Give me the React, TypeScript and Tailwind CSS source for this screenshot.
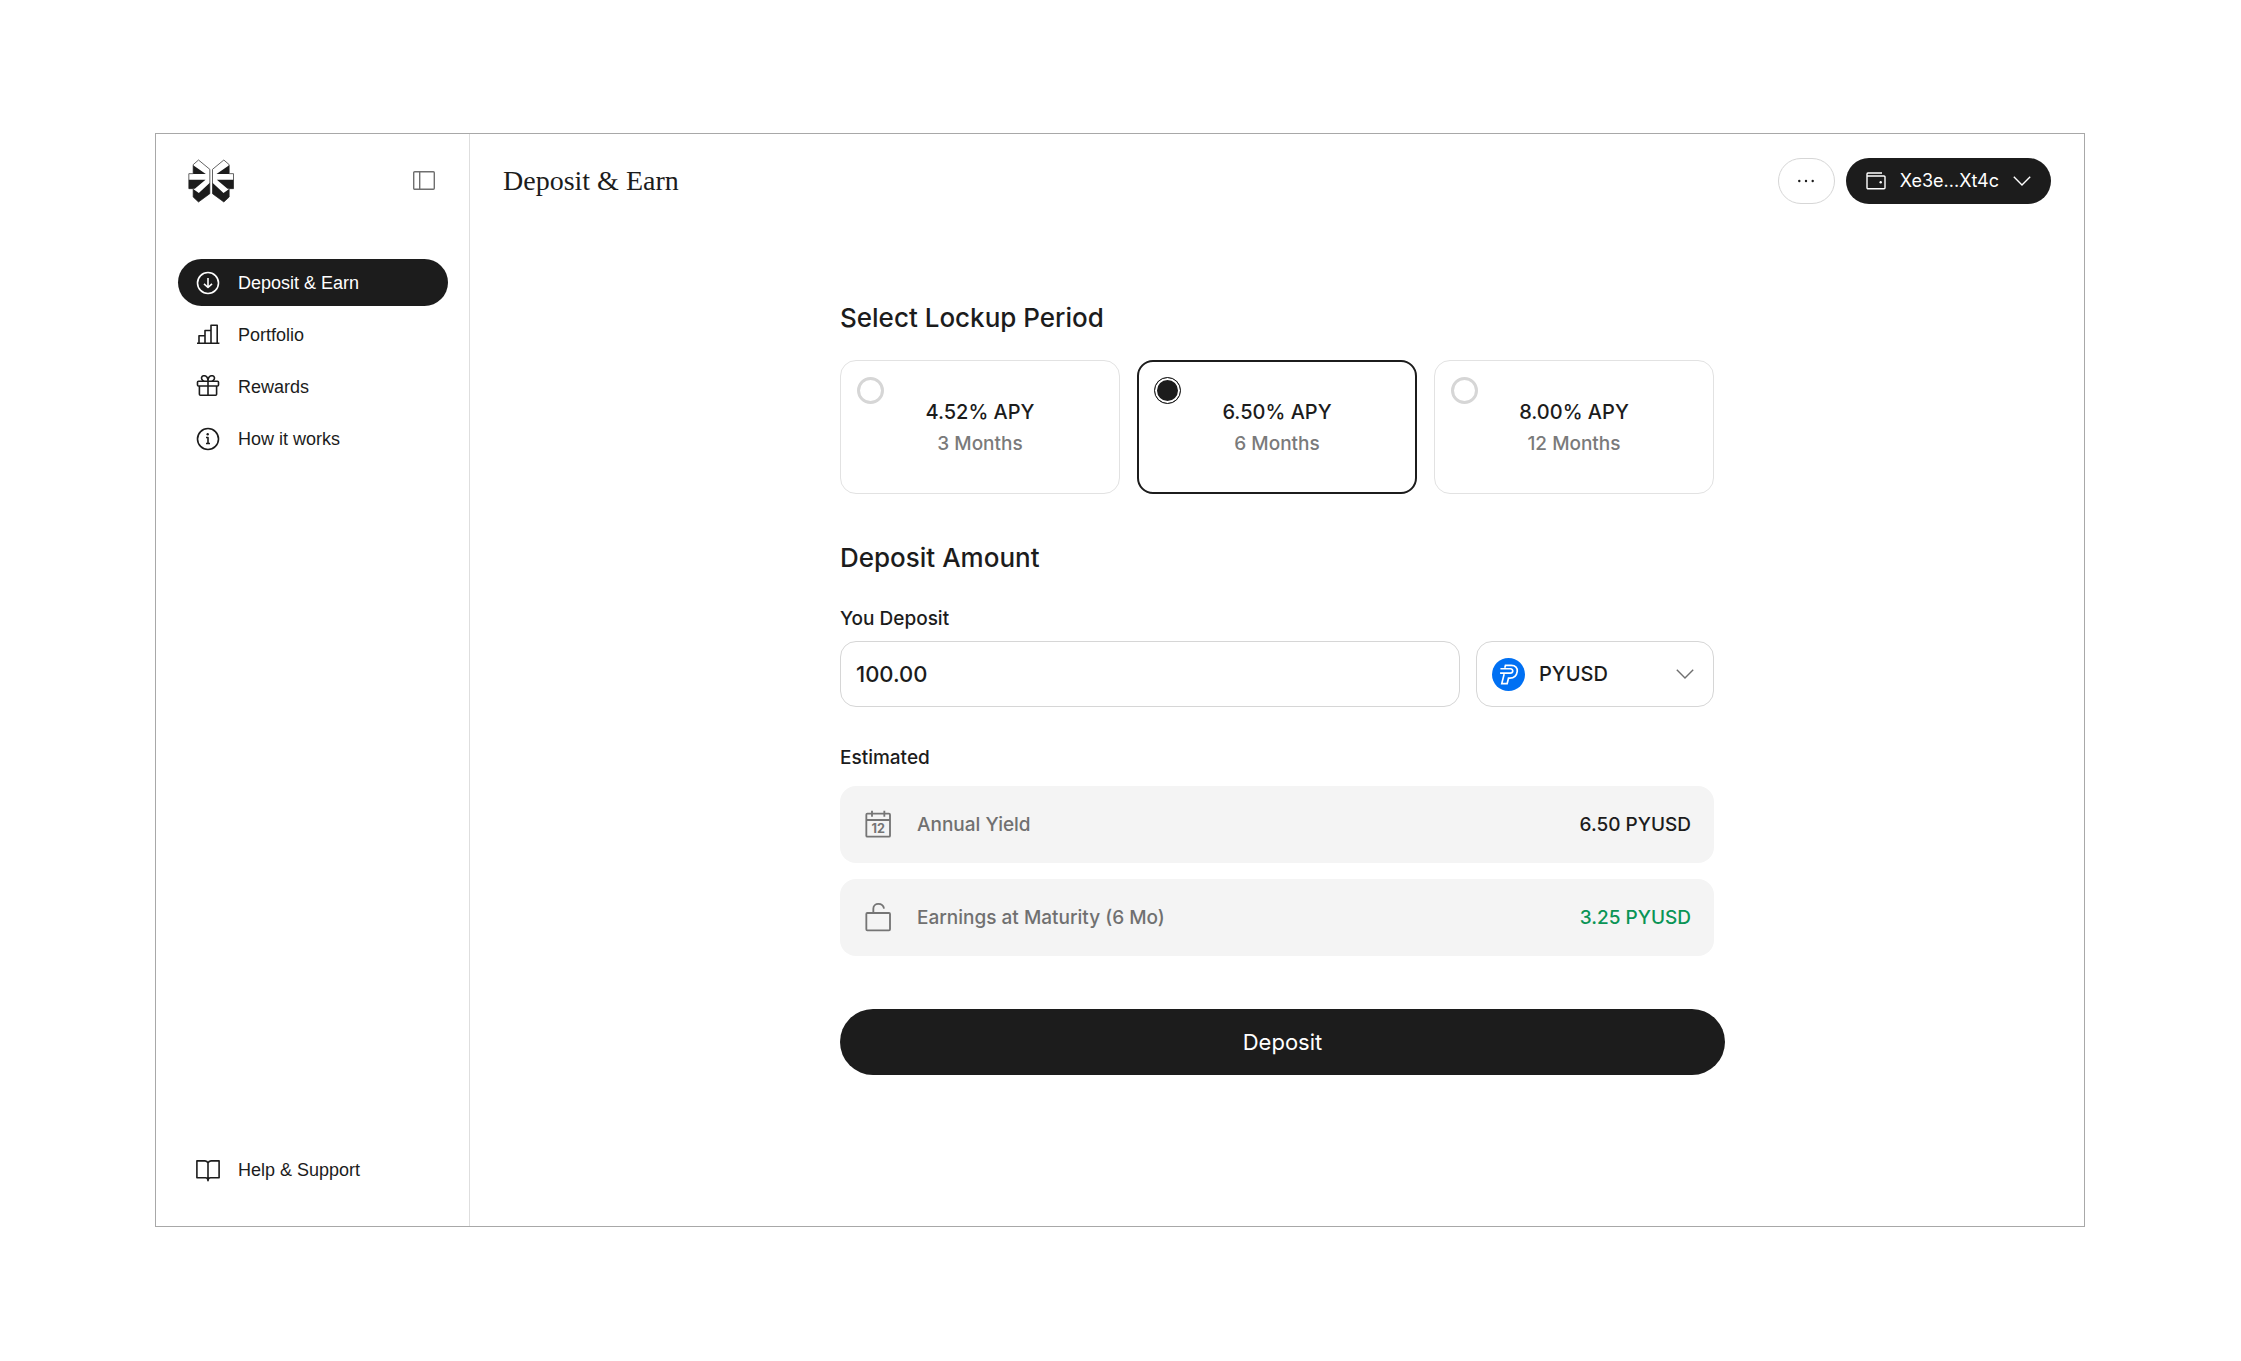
import React, { useState } from "react";

const plans = [
  { id: "3", apy: "4.52% APY", period: "3 Months" },
  { id: "6", apy: "6.50% APY", period: "6 Months" },
  { id: "12", apy: "8.00% APY", period: "12 Months" },
];

const Logo = () => (
  <svg viewBox="116 100 137 132" className="w-[46px] h-11" fill="none">
    {["", "translate(370 0) scale(-1 1)"].map((t) => (
      <g key={t} transform={t}>
        <path
          d="M147 103 181 131V204L147 229 131 214V189H118V144H131V117Z"
          fill="#fff"
          stroke="#444"
          strokeWidth="2.5"
        />
        <path
          d="M131 119 169 145H131ZM118 162H168L136 189H118ZM181 171V204L147 229 131 214V190L148 202Z"
          fill="#1c1c1c"
        />
      </g>
    ))}
  </svg>
);

const PanelIcon = () => (
  <svg viewBox="0 0 22 19" className="w-[22px] h-[19px]" fill="none" stroke="#6f6f6f" strokeWidth="1.4">
    <rect x="0.7" y="0.7" width="20.6" height="17.6" rx="1" />
    <path d="M6.7 1v17" />
  </svg>
);

const NavIcon = ({ children }: { children: React.ReactNode }) => (
  <svg
    viewBox="0 0 24 24"
    className="w-6 h-6 shrink-0"
    fill="none"
    stroke="currentColor"
    strokeWidth="1.6"
    strokeLinejoin="round"
  >
    {children}
  </svg>
);

const Chevron = ({ className }: { className: string }) => (
  <svg viewBox="0 0 18 10" className={className} fill="none" stroke="currentColor" strokeWidth="1.4">
    <path d="M0.8 0.8 9 9 17.2 0.8" />
  </svg>
);

const navItems = [
  {
    label: "Deposit & Earn",
    active: true,
    icon: (
      <>
        <circle cx="12" cy="12" r="10.5" />
        <path d="M12 7v9.5M8 12.8l4 3.7 4-3.7" />
      </>
    ),
  },
  {
    label: "Portfolio",
    icon: <path d="M1 20.3h22.4M3 20v-7.3h6M9 20V7.5h6M15 20V2.3h6.2V20" />,
  },
  {
    label: "Rewards",
    icon: (
      <>
        <rect x="1.5" y="6.3" width="21" height="4.7" rx="1" />
        <path d="M3.4 11v8.3a1 1 0 0 0 1 1h15.2a1 1 0 0 0 1-1V11M12 6.3v14" />
        <path d="M12 6.3C12 3 10.5 0.7 8 0.7 5.5 0.7 4.8 3.6 6.5 5.2 7 5.8 7.6 6.2 8.2 6.3M12 6.3C12 3 13.5 0.7 16 0.7c2.5 0 3.2 2.9 1.5 4.5C17 5.8 16.4 6.2 15.8 6.3" />
      </>
    ),
  },
  {
    label: "How it works",
    icon: (
      <>
        <circle cx="12" cy="12" r="10.5" />
        <path d="M10 10.5h2v6M10 16.5h4" />
        <circle cx="11.7" cy="7.2" r="1.2" fill="currentColor" stroke="none" />
      </>
    ),
  },
];

const Sidebar = () => (
  <aside className="w-[314px] shrink-0 border-r border-[#dedede] flex flex-col">
    <div className="flex items-center justify-between h-[93px] pl-8 pr-[34px]">
      <a href="#" aria-label="Home">
        <Logo />
      </a>
      <button aria-label="Toggle sidebar">
        <PanelIcon />
      </button>
    </div>
    <nav className="flex flex-col gap-[5px] pl-[22px] pr-[21px] mt-8 flex-1 pb-[33px] font-['Liberation_Sans',Arial,sans-serif] text-lg">
      {navItems.map((item) => (
        <a
          key={item.label}
          href="#"
          className={`flex items-center gap-[18px] h-[47px] px-[18px] rounded-full ${
            item.active ? "bg-[#1c1c1c] text-white" : ""
          }`}
        >
          <NavIcon>{item.icon}</NavIcon>
          {item.label}
        </a>
      ))}
      <a href="#" className="flex items-center gap-[18px] h-[47px] px-[18px] mt-auto">
        <NavIcon>
          <path d="M12 5C11.5 3.6 10.5 2.9 9 2.9H0.9V19.8H9.5C11 19.8 12 20.5 12 22.8 12 20.5 13 19.8 14.5 19.8H23.1V2.9H15C13.5 2.9 12.5 3.6 12 5V22" />
        </NavIcon>
        Help &amp; Support
      </a>
    </nav>
  </aside>
);

const Header = () => (
  <header className="flex items-center justify-between h-[93px] px-[33px]">
    <h1 className="font-['Liberation_Serif','Times_New_Roman',serif] text-[28px] leading-9">Deposit &amp; Earn</h1>
    <div className="flex gap-[11px]">
      <button
        aria-label="More"
        className="flex items-center justify-center w-[57px] h-[46px] rounded-full border border-[#d6d6d6]"
      >
        <svg viewBox="0 0 18 4" className="w-[18px] h-1" fill="currentColor">
          <circle cx="2.3" cy="2" r="1.2" />
          <circle cx="9" cy="2" r="1.2" />
          <circle cx="15.7" cy="2" r="1.2" />
        </svg>
      </button>
      <button className="flex items-center gap-[14px] h-[46px] px-5 rounded-full bg-[#1c1c1c] text-white text-lg">
        <svg viewBox="0 0 20 18" className="w-5 h-[18px]" fill="none" stroke="currentColor" strokeWidth="1.4">
          <path d="M16 1H2A1.2 1.2 0 0 0 1 2.2V15.7A1 1 0 0 0 2 16.7H18A1 1 0 0 0 19 15.7V5A1 1 0 0 0 18 4H2A1 1 0 0 1 1 3" />
          <circle cx="14.7" cy="10.3" r="1.2" fill="currentColor" stroke="none" />
        </svg>
        Xe3e...Xt4c
        <Chevron className="w-[18px] h-[10px]" />
      </button>
    </div>
  </header>
);

const CoinIcon = () => (
  <svg viewBox="159 174 98 98" className="w-full h-full" fill="none" stroke="#fff" strokeWidth="5">
    <circle cx="208" cy="223" r="49" fill="#0070f3" stroke="none" />
    <path d="M197 203 199 196H216C229 196 235 204 234 214 232 228 224 234 212 234H208L204 250H188L195 222" />
    <path d="M184 206H214C223 206 223 219 213 219H183" />
  </svg>
);

const EstimateRow = ({
  icon,
  label,
  value,
  green,
}: {
  icon: React.ReactNode;
  label: string;
  value: string;
  green?: boolean;
}) => (
  <div className="flex items-center h-[77px] pl-[25px] pr-[23px] rounded-2xl bg-[#f4f4f4]">
    {icon}
    <dt className="ml-[26px] text-[#707070]">{label}</dt>
    <dd className={`ml-auto ${green ? "text-[#0a9456]" : ""}`}>{value}</dd>
  </div>
);

const DepositForm = () => {
  const [plan, setPlan] = useState("6");
  const [amount, setAmount] = useState("100.00");

  return (
    <form className="flex flex-col w-full max-w-[874px] mx-auto mt-[73px] text-[19px] leading-7 font-medium">
      {/* Lockup period */}
      <h2 id="lockup" className="text-[26px] leading-9">
        Select Lockup Period
      </h2>
      <div role="radiogroup" aria-labelledby="lockup" className="grid grid-cols-3 gap-[17px] mt-6">
        {plans.map((p) => (
          <label
            key={p.id}
            className={`grid h-[134px] rounded-2xl ${
              plan === p.id ? "border-2 border-[#1c1c1c] p-[15px]" : "border border-[#e2e2e2] p-4"
            }`}
          >
            <input
              type="radio"
              name="plan"
              checked={plan === p.id}
              onChange={() => setPlan(p.id)}
              className="col-start-1 row-start-1 appearance-none w-[27px] h-[27px] rounded-full border-[3px] border-[#d6d6d6] checked:border checked:border-[#1c1c1c] checked:bg-[#1c1c1c] checked:shadow-[inset_0_0_0_2px_#fff]"
            />
            <span className="col-start-1 row-start-1 self-center text-center flex flex-col pt-0.5">
              <span className="text-xl leading-8">{p.apy}</span>
              <span className="leading-8 text-[#7a7a7a]">{p.period}</span>
            </span>
          </label>
        ))}
      </div>

      {/* Amount */}
      <h2 className="text-[26px] leading-9 mt-[46px]">Deposit Amount</h2>
      <label htmlFor="amount" className="mt-[29px]">
        You Deposit
      </label>
      <div className="flex gap-4 mt-2">
        <input
          id="amount"
          value={amount}
          onChange={(e) => setAmount(e.target.value)}
          className="flex-1 min-w-0 h-[66px] px-[15px] text-[22px] rounded-2xl border border-[#d6d6d6]"
        />
        <div className="relative w-[238px]">
          <select
            aria-label="Token"
            className="appearance-none w-full h-[66px] pl-[62px] text-xl rounded-2xl border border-[#d6d6d6]"
          >
            <option>PYUSD</option>
          </select>
          <span className="absolute left-4 inset-y-0 my-auto w-[33px] h-[33px] pointer-events-none">
            <CoinIcon />
          </span>
          <Chevron className="absolute right-5 inset-y-0 my-auto w-[18px] h-[10px] text-[#6f6f6f] pointer-events-none" />
        </div>
      </div>

      {/* Estimates */}
      <h3 className="mt-[37px]">Estimated</h3>
      <dl className="flex flex-col gap-4 mt-[14px]">
        <EstimateRow
          label="Annual Yield"
          value="6.50 PYUSD"
          icon={
            <svg viewBox="136 119 78 90" className="w-[26px] h-[30px]" fill="none" stroke="#757575" strokeWidth="5.5">
              <rect x="140" y="130" width="71" height="69" rx="3" />
              <path d="M140 149H211M157 121V139M194 121V139" />
              <text
                x="176"
                y="189"
                textAnchor="middle"
                fill="#757575"
                stroke="none"
                className="font-['Inter',sans-serif] font-bold text-[38px]"
              >
                12
              </text>
            </svg>
          }
        />
        <EstimateRow
          green
          label="Earnings at Maturity (6 Mo)"
          value="3.25 PYUSD"
          icon={
            <svg viewBox="136 396 78 90" className="w-[26px] h-[30px]" fill="none" stroke="#757575" strokeWidth="5.5">
              <rect x="140" y="426" width="71" height="52" rx="3" />
              <path d="M161 426V413C161 394 190 394 193 413" />
            </svg>
          }
        />
      </dl>

      <button
        type="button"
        className="h-[66px] mt-[53px] -mr-[11px] rounded-full bg-[#1c1c1c] text-white text-[22px] font-normal"
      >
        Deposit
      </button>
    </form>
  );
};

export default function App() {
  return (
    <div className="flex min-h-screen pl-[155px] pr-[156px] pt-[133px] pb-[134px] bg-white text-[#1c1c1c] font-['Inter',sans-serif]">
      <div className="flex flex-1 border border-[#a8a8a8]">
        <Sidebar />
        <main className="flex-1 min-w-0">
          <Header />
          <DepositForm />
        </main>
      </div>
    </div>
  );
}
